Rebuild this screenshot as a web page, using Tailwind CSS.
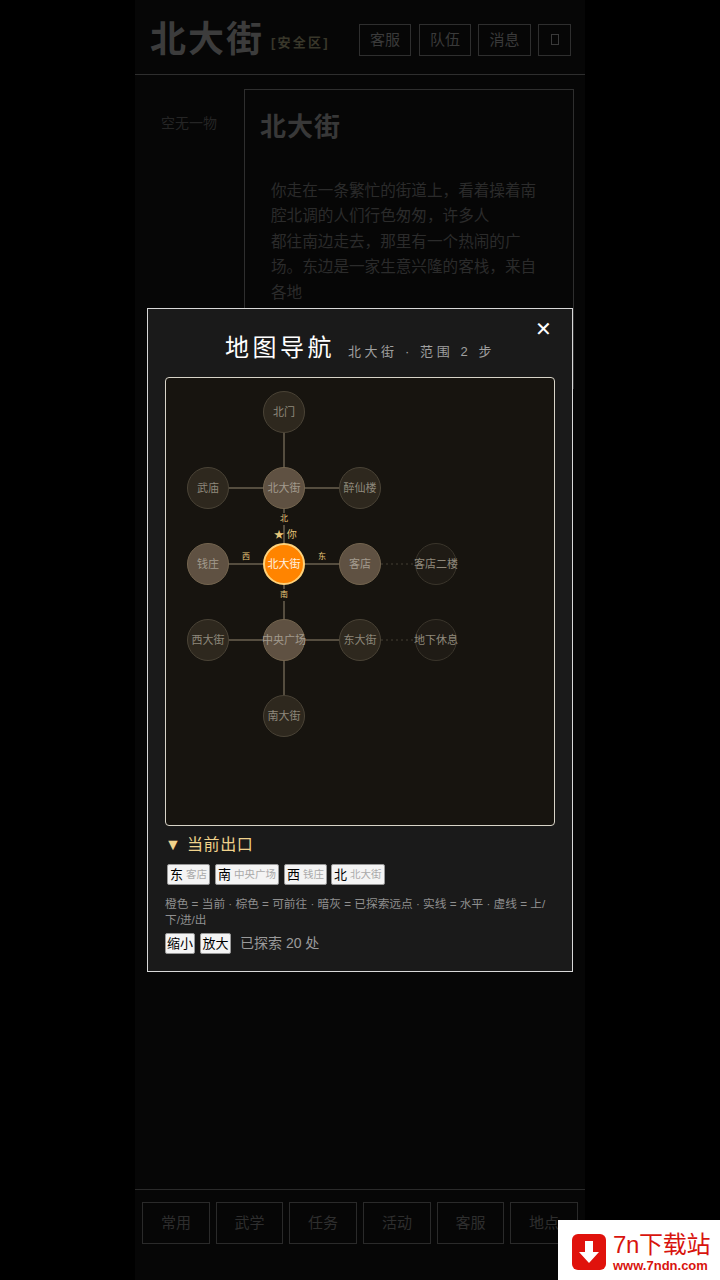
<!DOCTYPE html>
<html lang="zh">

<head>
    <meta charset="UTF-8" />
    <meta name="viewport" content="width=device-width, initial-scale=1.0" />
    <title>北大街</title>
    <script src="https://cdn.jsdelivr.net/npm/@tailwindcss/browser@4"></script>
</head>

<body class="bg-black h-[1280px] overflow-hidden relative font-['Liberation_Sans','Noto_Sans_CJK_SC',sans-serif]">
    <!-- 底层页面（被遮罩压暗） -->
    <div class="w-[450px] h-[1280px] mx-auto bg-[#060606] flex flex-col">
        <header class="h-[75px] shrink-0 border-b border-[#2e2e2e] flex items-center pl-[15px] pr-[14px] pt-[6px]">
            <h1 class="text-[36px] font-bold text-[#3c3c3c] tracking-[2px] leading-none">北大街</h1>
            <span class="ml-[7px] mt-[5px] text-[13px] font-bold tracking-[2.2px] text-[#39372a] whitespace-nowrap">[安全区]</span>
            <div class="ml-auto flex gap-[7px] text-[#3a3a3a] text-[15px]">
                <div class="w-[52px] h-[32px] border border-[#2e2e2e] flex items-center justify-center mr-[1px]">客服</div>
                <div class="w-[52px] h-[32px] border border-[#2e2e2e] flex items-center justify-center">队伍</div>
                <div class="w-[53px] h-[32px] border border-[#2e2e2e] flex items-center justify-center">消息</div>
                <div class="w-[33px] h-[32px] border border-[#2e2e2e] flex items-center justify-center">
                    <span class="block w-[8px] h-[11px] border border-[#3a3a3a] -mt-[2px]"></span>
                </div>
            </div>
        </header>
        <div class="flex flex-1 pt-[14px]">
            <div class="w-[109px] shrink-0 pt-[24px] pl-[26px] text-[14px] text-[#252525]">空无一物</div>
            <div class="w-[330px] h-[300px] border border-[#2e2e2e] pl-[15px]">
                <h2 class="text-[26px] font-bold text-[#383838] tracking-[1px] mt-[20px] leading-[34px]">北大街</h2>
                <p class="w-[270px] mt-[34px] ml-[11px] text-[15.6px] leading-[25.4px] text-[#2b2b2b]">你走在一条繁忙的街道上，看着操着南腔北调的人们行色匆匆，许多人<br />都往南边走去，那里有一个热闹的广场。东边是一家生意兴隆的客栈，来自各地</p>
            </div>
        </div>
        <nav class="h-[91px] shrink-0 border-t border-[#2a2a2a] flex gap-[6px] pl-[7px] pt-[12px] text-[15px] text-[#2e2e2e]">
            <div class="w-[68px] h-[42px] border border-[#2a2a2a] flex items-center justify-center">常用</div>
            <div class="w-[67px] h-[42px] border border-[#2a2a2a] flex items-center justify-center">武学</div>
            <div class="w-[68px] h-[42px] border border-[#2a2a2a] flex items-center justify-center">任务</div>
            <div class="w-[68px] h-[42px] border border-[#2a2a2a] flex items-center justify-center">活动</div>
            <div class="w-[67px] h-[42px] border border-[#2a2a2a] flex items-center justify-center">客服</div>
            <div class="w-[68px] h-[42px] border border-[#2a2a2a] flex items-center justify-center">地点</div>
        </nav>
    </div>

    <!-- 地图弹窗 -->
    <div class="absolute left-[147px] top-[308px] w-[426px] h-[664px] bg-[#1a1a1a] border border-[#d8d8d8] pt-[17px] px-[17px] text-[#aaaaaa]">
        <button class="absolute right-[20px] top-[10px] text-white text-[20px] leading-[20px]">✕</button>
        <div class="h-[51px] flex items-baseline justify-center gap-[13px] whitespace-nowrap">
            <span class="text-[24px] leading-[44px] text-white tracking-[3.5px]">地图导航</span>
            <span class="text-[13px] text-[#a0a0a0] tracking-[3.6px]">北大街 · 范围 2 步</span>
        </div>

        <div class="relative w-[390px] h-[449px] bg-[#17140f] border border-[#d8d4c8] rounded-[4px]">
            <svg class="absolute left-0 top-0" width="388" height="447" viewBox="0 0 388 447" fill="none">
                <g stroke="#6b6150" stroke-width="1.5">
                    <path d="M118 34V338" />
                    <path d="M41 110H194" />
                    <path d="M41 186H194" />
                    <path d="M41 262H194" />
                </g>
                <g stroke="#453f34" stroke-width="1" stroke-dasharray="2 3">
                    <path d="M215 186H270" />
                    <path d="M215 262H270" />
                </g>
            </svg>

            <!-- 节点 -->
            <div class="absolute left-[97px] top-[13px] w-[42px] h-[42px] rounded-full bg-[#2e281e] border border-[#4a4336] flex items-center justify-center text-[11px] text-[#8f897c] whitespace-nowrap">北门</div>
            <div class="absolute left-[21px] top-[89px] w-[42px] h-[42px] rounded-full bg-[#2e281e] border border-[#4a4336] flex items-center justify-center text-[11px] text-[#8f897c] whitespace-nowrap">武庙</div>
            <div class="absolute left-[97px] top-[89px] w-[42px] h-[42px] rounded-full bg-[#5f5142] border border-[#74654f] flex items-center justify-center text-[11px] text-[#a39b8e] whitespace-nowrap">北大街</div>
            <div class="absolute left-[173px] top-[89px] w-[42px] h-[42px] rounded-full bg-[#2e281e] border border-[#4a4336] flex items-center justify-center text-[11px] text-[#8f897c] whitespace-nowrap">醉仙楼</div>
            <div class="absolute left-[21px] top-[165px] w-[42px] h-[42px] rounded-full bg-[#5f5142] border border-[#74654f] flex items-center justify-center text-[11px] text-[#a39b8e] whitespace-nowrap">钱庄</div>
            <div class="absolute left-[97px] top-[165px] w-[42px] h-[42px] rounded-full bg-[#ff8400] border-2 border-[#ffd27a] flex items-center justify-center text-[11px] text-[#fff2e0] whitespace-nowrap">北大街</div>
            <div class="absolute left-[173px] top-[165px] w-[42px] h-[42px] rounded-full bg-[#5f5142] border border-[#74654f] flex items-center justify-center text-[11px] text-[#a39b8e] whitespace-nowrap">客店</div>
            <div class="absolute left-[249px] top-[165px] w-[42px] h-[42px] rounded-full bg-[#1f1b15] border border-[#3a352b] flex items-center justify-center text-[11px] text-[#8f897c] whitespace-nowrap">客店二楼</div>
            <div class="absolute left-[21px] top-[241px] w-[42px] h-[42px] rounded-full bg-[#2e281e] border border-[#4a4336] flex items-center justify-center text-[11px] text-[#8f897c] whitespace-nowrap">西大街</div>
            <div class="absolute left-[97px] top-[241px] w-[42px] h-[42px] rounded-full bg-[#5f5142] border border-[#74654f] flex items-center justify-center text-[11px] text-[#a39b8e] whitespace-nowrap">中央广场</div>
            <div class="absolute left-[173px] top-[241px] w-[42px] h-[42px] rounded-full bg-[#2e281e] border border-[#4a4336] flex items-center justify-center text-[11px] text-[#8f897c] whitespace-nowrap">东大街</div>
            <div class="absolute left-[249px] top-[241px] w-[42px] h-[42px] rounded-full bg-[#1f1b15] border border-[#3a352b] flex items-center justify-center text-[11px] text-[#8f897c] whitespace-nowrap">地下休息</div>
            <div class="absolute left-[97px] top-[317px] w-[42px] h-[42px] rounded-full bg-[#2e281e] border border-[#4a4336] flex items-center justify-center text-[11px] text-[#8f897c] whitespace-nowrap">南大街</div>

            <!-- 方向标记 -->
            <span class="absolute left-[114px] top-[135px] text-[8px] leading-[12px] text-[#e8c77a] bg-[#17140f]">北</span>
            <span class="absolute left-[114px] top-[211px] text-[8px] leading-[12px] text-[#e8c77a] bg-[#17140f]">南</span>
            <span class="absolute left-[76px] top-[174px] text-[8px] leading-[10px] text-[#e8c77a]">西</span>
            <span class="absolute left-[152px] top-[174px] text-[8px] leading-[10px] text-[#e8c77a]">东</span>
            <span class="absolute left-[108px] top-[151px] text-[10px] leading-[12px] text-[#e8c77a] whitespace-nowrap">★ 你</span>
        </div>

        <div class="mt-[7px] text-[16px] leading-[24px] tracking-[0.6px] text-[#f0d28c] flex items-center"><span class="text-[16px] w-[22px]">▼</span>当前出口</div>

        <div class="mt-[7px] ml-[2px] flex gap-[5px]">
            <div class="h-[21px] px-[2px] bg-[#f4f4f4] border border-[#999999] rounded-[2px] flex items-center gap-[3px] text-[13px] text-black whitespace-nowrap">东<span class="text-[10.5px] text-[#aaaaaa]">客店</span></div>
            <div class="h-[21px] px-[2px] bg-[#f4f4f4] border border-[#999999] rounded-[2px] flex items-center gap-[3px] text-[13px] text-black whitespace-nowrap">南<span class="text-[10.5px] text-[#aaaaaa]">中央广场</span></div>
            <div class="h-[21px] px-[2px] bg-[#f4f4f4] border border-[#999999] rounded-[2px] flex items-center gap-[3px] text-[13px] text-black whitespace-nowrap">西<span class="text-[10.5px] text-[#aaaaaa]">钱庄</span></div>
            <div class="h-[21px] px-[2px] bg-[#f4f4f4] border border-[#999999] rounded-[2px] flex items-center gap-[3px] text-[13px] text-black whitespace-nowrap -ml-[1px]">北<span class="text-[10.5px] text-[#aaaaaa]">北大街</span></div>
        </div>

        <p class="mt-[11px] text-[11.7px] leading-[16px] text-[#8f8f8f] whitespace-nowrap">橙色 = 当前 · 棕色 = 可前往 · 暗灰 = 已探索远点 · 实线 = 水平 · 虚线 = 上/<br />下/进/出</p>

        <div class="mt-[5px] flex items-center gap-[5px]">
            <div class="h-[21px] w-[30px] bg-[#f4f4f4] border border-[#999999] rounded-[2px] flex items-center justify-center text-[13px] text-black whitespace-nowrap">缩小</div>
            <div class="h-[21px] w-[31px] bg-[#f4f4f4] border border-[#999999] rounded-[2px] flex items-center justify-center text-[13px] text-black whitespace-nowrap">放大</div>
            <span class="ml-[4px] text-[14px] text-[#9a9a9a]">已探索 20 处</span>
        </div>
    </div>

    <!-- 水印 -->
    <div class="absolute right-0 bottom-0 w-[162px] h-[60px] bg-white flex items-center pl-[14px] pt-[4px] gap-[7px]">
        <svg width="34" height="36" viewBox="0 0 34 36">
            <rect x="0" y="0" width="34" height="36" rx="6" fill="#e0120c" />
            <path d="M13 7H21V18H27L17 29L7 18H13Z" fill="#ffffff" />
        </svg>
        <div class="text-[#d8140e] flex flex-col">
            <span class="text-[24px] leading-[26px] whitespace-nowrap -tracking-[0.3px]">7n下载站</span>
            <span class="text-[13px] leading-[15px] font-bold whitespace-nowrap">www.7ndn.com</span>
        </div>
    </div>
</body>

</html>
